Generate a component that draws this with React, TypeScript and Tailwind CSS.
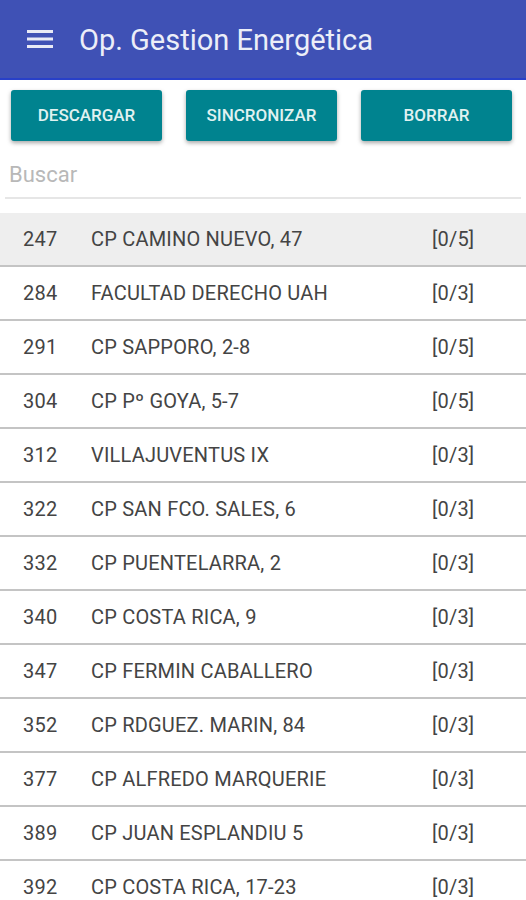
import React from 'react';

const rows: [string, string, string][] = [
  ['247', 'CP CAMINO NUEVO, 47', '[0/5]'],
  ['284', 'FACULTAD DERECHO UAH', '[0/3]'],
  ['291', 'CP SAPPORO, 2-8', '[0/5]'],
  ['304', 'CP Pº GOYA, 5-7', '[0/5]'],
  ['312', 'VILLAJUVENTUS IX', '[0/3]'],
  ['322', 'CP SAN FCO. SALES, 6', '[0/3]'],
  ['332', 'CP PUENTELARRA, 2', '[0/3]'],
  ['340', 'CP COSTA RICA, 9', '[0/3]'],
  ['347', 'CP FERMIN CABALLERO', '[0/3]'],
  ['352', 'CP RDGUEZ. MARIN, 84', '[0/3]'],
  ['377', 'CP ALFREDO MARQUERIE', '[0/3]'],
  ['389', 'CP JUAN ESPLANDIU 5', '[0/3]'],
  ['392', 'CP COSTA RICA, 17-23', '[0/3]'],
];

const buttons = ['DESCARGAR', 'SINCRONIZAR', 'BORRAR'];

export default function App() {
  return (
    <div className="w-[526px] h-[900px] overflow-hidden bg-white" style={{ fontFamily: 'Roboto, "Noto Sans", sans-serif' }}>
      {/* Toolbar */}
      <div className="h-[80px] bg-[#3f51b5] border-b-2 border-[#2840c8] flex items-center">
        <svg width="26" height="20" viewBox="0 0 26 20" className="ml-[27px]">
          <rect x="0" y="1" width="26" height="3" fill="#e8eaf6" />
          <rect x="0" y="8.5" width="26" height="3" fill="#e8eaf6" />
          <rect x="0" y="16" width="26" height="3" fill="#e8eaf6" />
        </svg>
        <span className="ml-[26px] mt-[2px] text-[29px] text-[#eceef8] leading-none">Op. Gestion Energética</span>
      </div>

      {/* Actions */}
      <div className="flex gap-[24px] pl-[11px] pt-[10px]">
        {buttons.map((b) => (
          <button
            key={b}
            className="w-[151px] h-[51px] rounded-[3px] bg-[#00838f] text-[#e0f2f1] text-[17px] font-medium shadow-[0_2px_4px_rgba(0,0,0,0.35)]"
          >
            {b}
          </button>
        ))}
      </div>

      {/* Search */}
      <div className="mx-[5px] mt-[19px] border-b-2 border-[#e6e6e6] h-[39px] flex items-start">
        <span className="ml-[4px] text-[22px] text-[#b8b8b8] leading-none mt-[4px]">Buscar</span>
      </div>

      {/* List */}
      <div className="mt-[14px]">
        {rows.map(([n, name, c], i) => (
          <div
            key={n}
            className={`h-[54px] flex items-center border-b-2 border-[#c4c4c4] text-[20px] text-[#444444] tracking-[0.2px] ${i === 0 ? 'bg-[#eeeeee]' : 'bg-white'}`}
          >
            <span className="w-[91px] pl-[23px] shrink-0">{n}</span>
            <span className="w-[341px] shrink-0">{name}</span>
            <span>{c}</span>
          </div>
        ))}
      </div>
    </div>
  );
}
